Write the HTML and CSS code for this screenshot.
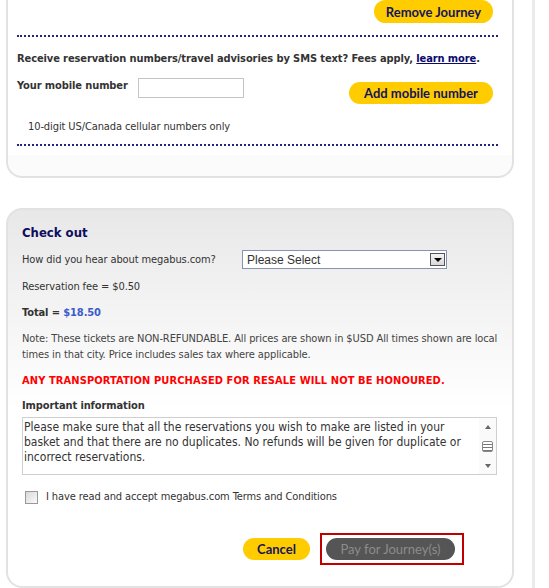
FILE: index.html
```html
<!DOCTYPE html>
<html lang="en">
<head>
  <meta charset="UTF-8">
  <title>megabus.com - Basket</title>
  <link rel="stylesheet" href="styles.css">
</head>
<body>
  <div class="page">
    <div class="card card-basket">
      <div class="card-body">
        <div class="row-end">
          <button class="btn btn-yellow btn-remove">Remove Journey</button>
        </div>
        <hr class="dots">
        <p class="sms">Receive reservation numbers/travel advisories by SMS text? Fees apply, <a href="#">learn more</a>.</p>
        <div class="mobile-row">
          <label class="mobile-label" for="mobile">Your mobile number</label>
          <input id="mobile" class="mobile-input" type="text">
          <button class="btn btn-yellow btn-add">Add mobile number</button>
        </div>
        <p class="hint">10-digit US/Canada cellular numbers only</p>
        <hr class="dots dots-last">
      </div>
    </div>

    <div class="card card-checkout">
      <h2 class="title">Check out</h2>
      <div class="field-row">
        <span class="field-label">How did you hear about megabus.com?</span>
        <div class="select">
          <span>Please Select</span>
          <span class="select-btn"></span>
        </div>
      </div>
      <p class="line">Reservation fee = $0.50</p>
      <p class="line total">Total = <span class="price">$18.50</span></p>
      <p class="line note">Note: These tickets are NON-REFUNDABLE. All prices are shown in $USD All times shown are local times in that city. Price includes sales tax where applicable.</p>
      <p class="line warning">ANY TRANSPORTATION PURCHASED FOR RESALE WILL NOT BE HONOURED.</p>
      <h3 class="info-title">Important information</h3>
      <div class="info-box">
        <div class="info-text">Please make sure that all the reservations you wish to make are listed in your basket and that there are no duplicates. No refunds will be given for duplicate or incorrect reservations.</div>
        <div class="scroll">
          <span class="arrow-up"></span>
          <span class="grip"></span>
          <span class="arrow-down"></span>
        </div>
      </div>
      <label class="terms">
        <span class="checkbox"></span>
        I have read and accept megabus.com Terms and Conditions
      </label>
      <div class="buttons">
        <button class="btn btn-yellow btn-cancel">Cancel</button>
        <div class="pay-box">
          <button class="btn btn-pay" disabled>Pay for Journey(s)</button>
        </div>
      </div>
    </div>
  </div>
</body>
</html>
```

FILE: styles.css
```css
body {
  margin: 0;
  background: #fff;
  font-family: Tahoma, "DejaVu Sans Condensed", "Liberation Sans", sans-serif;
  font-size: 11px;
  letter-spacing: -0.1px;
  color: #333;
}

.page {
  width: 532px;
  min-height: 588px;
  border-right: 3px solid #ebebeb;
}

.card {
  margin-left: 6px;
  width: 508px;
  box-sizing: border-box;
  border: 2px solid #e2e2e2;
}

/* basket card, its top is scrolled off */
.card-basket {
  border-top: none;
  border-radius: 0 0 16px 16px;
  background: #fbfbfb;
  padding-bottom: 21px;
}

.card-body {
  background: #fff;
  padding: 0 14px 9px 9px;
}

.row-end {
  display: flex;
  justify-content: flex-end;
  padding-right: 5px;
}

.btn {
  font-family: Lato, "Liberation Sans", sans-serif;
  font-weight: 700;
  font-size: 13px;
  letter-spacing: 0;
  white-space: nowrap;
  border: none;
  border-radius: 12px;
  height: 23px;
  padding: 0;
  cursor: pointer;
}

.btn-yellow {
  background: #ffcc00;
  color: #14145a;
}

.btn-remove {
  width: 119px;
}

.dots {
  margin: 12px 0 0;
  border: none;
  border-top: 2px dotted #23237a;
  height: 0;
}

.sms {
  margin: 14px 0 0;
  font-weight: bold;
  line-height: 16px;
}

.sms a {
  color: #0a0a6e;
}

.mobile-row {
  display: flex;
  align-items: flex-start;
  margin-top: 11px;
}

.mobile-label {
  width: 121px;
  font-weight: bold;
  line-height: 16px;
}

.mobile-input {
  width: 106px;
  height: 20px;
  box-sizing: border-box;
  border: 1px solid #c4c4c4;
  margin: 0;
}

.btn-add {
  margin: 4px 5px 0 auto;
  width: 144px;
  height: 22px;
}

.hint {
  margin: 15px 0 0 11px;
  line-height: 16px;
}

.dots-last {
  margin-top: 9px;
}

.card-checkout {
  margin-top: 30px;
  border-radius: 16px;
  height: 380px;
  padding: 15px 14px 0;
  background: linear-gradient(#e8e8e8, #fff 200px);
}

.title {
  margin: 0;
  font-size: 13px;
  line-height: 16px;
  letter-spacing: 0;
  color: #0e0e5e;
}

.field-row {
  display: flex;
  margin-top: 9px;
}

.field-label {
  width: 220px;
  line-height: 19px;
}

.select {
  width: 205px;
  height: 19px;
  box-sizing: border-box;
  border: 1px solid #8893b0;
  background: #fff;
  display: flex;
  align-items: center;
  justify-content: space-between;
  padding: 0 1px 0 4px;
  font-family: "Liberation Sans", sans-serif;
  font-size: 12px;
  letter-spacing: 0;
  color: #333;
}

.select-btn {
  width: 15px;
  height: 13px;
  box-sizing: border-box;
  border: 1px solid #555;
  background: linear-gradient(#f4f4f4, #d8d8d8);
  position: relative;
}

.select-btn::after {
  content: "";
  position: absolute;
  left: 3px;
  top: 4px;
  border-left: 4px solid transparent;
  border-right: 4px solid transparent;
  border-top: 4px solid #000;
}

.line {
  margin: 10px 0 0;
  line-height: 16px;
}

.total {
  font-weight: bold;
}

.price {
  color: #3a5ccc;
}

.note {
  color: #444;
}

.warning {
  color: #ff0000;
  font-weight: bold;
  letter-spacing: 0.1px;
}

.info-title {
  margin: 9px 0 0;
  font-size: 11px;
  line-height: 16px;
}

.info-box {
  margin-top: 3px;
  width: 475px;
  height: 58px;
  box-sizing: border-box;
  border: 1px solid #cfcfcf;
  background: #fff;
  display: flex;
}

.info-text {
  flex: 1;
  padding: 2px 11px 0 1px;
  font-size: 12px;
  letter-spacing: 0;
  line-height: 15px;
  color: #333;
}

.scroll {
  width: 17px;
  display: flex;
  flex-direction: column;
  align-items: center;
  justify-content: space-between;
  padding: 7px 0 6px;
  background: #fafafa;
}

.arrow-up {
  border-left: 3px solid transparent;
  border-right: 3px solid transparent;
  border-bottom: 4px solid #666;
}

.arrow-down {
  border-left: 3px solid transparent;
  border-right: 3px solid transparent;
  border-top: 4px solid #666;
}

.grip {
  width: 9px;
  height: 9px;
  border: 1px solid #888;
  border-radius: 2px;
  background: repeating-linear-gradient(#fff 0 2px, #777 2px 3px);
}

.terms {
  display: flex;
  align-items: center;
  gap: 8px;
  margin: 14px 0 0 3px;
  font-family: "DejaVu Sans Condensed", "DejaVu Sans", sans-serif;
  font-size: 11px;
  line-height: 16px;
  color: #333;
}

.checkbox {
  width: 13px;
  height: 13px;
  box-sizing: border-box;
  border: 1px solid #999;
  background: linear-gradient(135deg, #d8d8d8, #fbfbfb);
}

.buttons {
  display: flex;
  align-items: center;
  gap: 10px;
  margin-top: 28px;
  padding-left: 221px;
}

.btn-cancel {
  width: 67px;
  height: 22px;
}

.pay-box {
  border: 2px solid #c00000;
  padding: 3px 7px 3px 4px;
}

.btn-pay {
  width: 129px;
  height: 22px;
  background: #555;
  color: #8c8c8c;
  font-weight: 400;
  cursor: default;
}
```
